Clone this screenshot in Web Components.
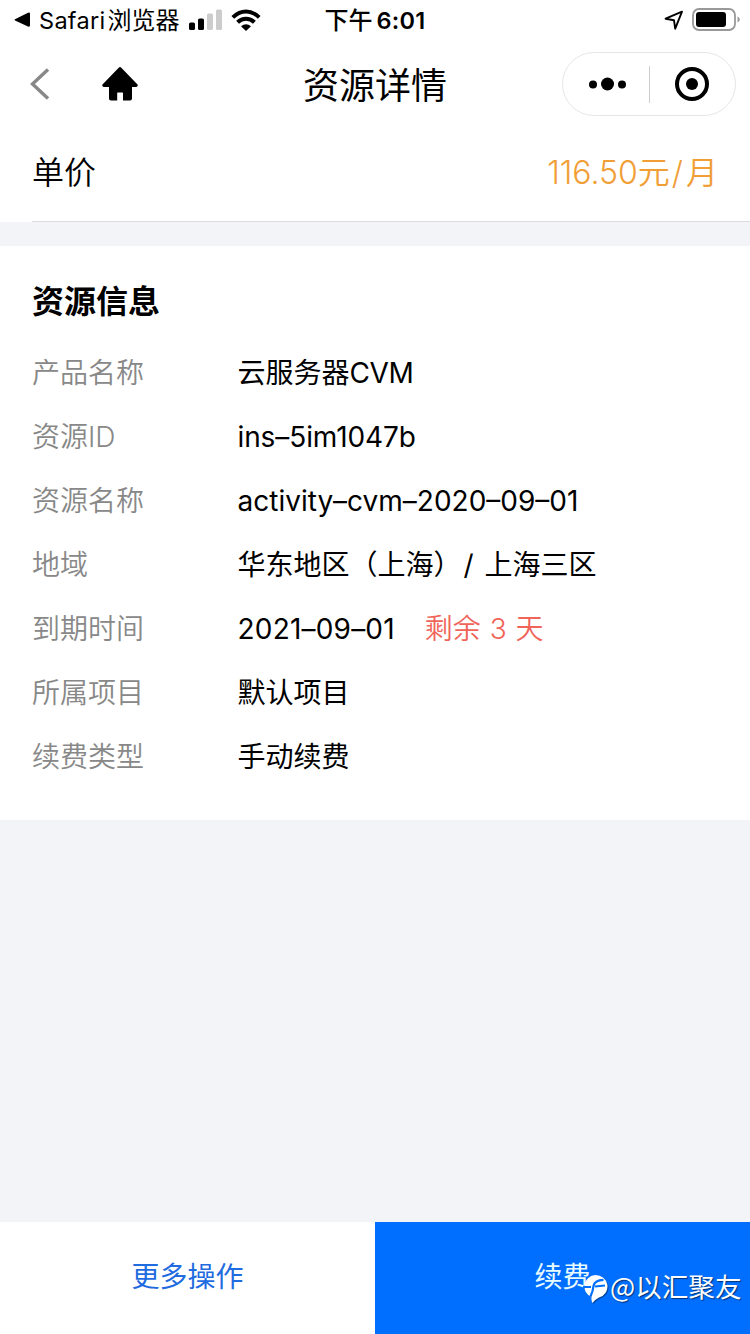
<!DOCTYPE html>
<html lang="zh-CN">
<head>
<meta charset="UTF-8">
<title>资源详情</title>
<style>
  body {
    margin: 0;
    background: #f2f4f7;
    color: #000;
    font-family: Inter, "Noto Sans CJK SC", sans-serif;
  }
</style>
</head>
<body>
<resource-page>
  <status-bar slot="top" app="Safari" suffix="浏览器" period="下午" time="6:01"></status-bar>
  <nav-bar slot="top" title="资源详情"></nav-bar>
  <price-row slot="top" label="单价"><span>116.50</span>元<span style="margin:0 3px 0 2px">/</span>月</price-row>

  <info-card title="资源信息">
    <info-row label="产品名称">云服务器<span style="letter-spacing:-0.4px">CVM</span></info-row>
    <info-row label="资源ID"><span style="letter-spacing:-0.1px">ins–5im1047b</span></info-row>
    <info-row label="资源名称"><span>activity–cvm–2020–09–01</span></info-row>
    <info-row label="地域">华东地区（上海）<span style="letter-spacing:1.5px;margin-left:2px">/ </span>上海三区</info-row>
    <info-row label="到期时间"><span style="letter-spacing:0.2px">2021–09–01</span><span slot="note">剩余 3 天</span></info-row>
    <info-row label="所属项目">默认项目</info-row>
    <info-row label="续费类型">手动续费</info-row>
  </info-card>

  <action-bar slot="bottom">
    <action-button>更多操作</action-button>
    <action-button primary>续费</action-button>
  </action-bar>
</resource-page>
<water-mark>@以汇聚友</water-mark>

<script>
// Base class: puts markup and styles in an open shadow root
class BaseElement extends HTMLElement {
  constructor() {
    super();
    this.attachShadow({ mode: 'open' });
  }

  connectedCallback() {
    const template = document.createElement('template');
    template.innerHTML = `<style>${this.getStyles()}</style>${this.getTemplate()}`;
    this.shadowRoot.append(template.content.cloneNode(true));
  }
}

class ResourcePage extends BaseElement {
  getTemplate() {
    return `
      <header><slot name="top"></slot></header>
      <main><slot></slot></main>
      <slot name="bottom"></slot>
    `;
  }

  getStyles() {
    return `
      :host { display: flex; flex-direction: column; height: 1334px; overflow: hidden; }
      header { background: #fff; }
      main { flex: 1; padding-top: 24px; }
    `;
  }
}

class StatusBar extends BaseElement {
  getTemplate() {
    return `
      <div class="left">
        <svg width="16" height="16" viewBox="0 0 16 16"><path d="M1 7.2 14 .8Q16 .2 16 1.5V13.5Q16 15.2 14 14.4L1 8.4Q0 7.8 1 7.2Z"/></svg>
        <span class="app">${this.getAttribute('app')}</span>
        <span class="suffix">${this.getAttribute('suffix')}</span>
        <svg class="signal" width="33" height="22" viewBox="0 0 33 22">
          <rect x="0" y="13.5" width="6" height="7.5" rx="1.6"/>
          <rect x="9" y="9.5" width="6" height="11.5" rx="1.6"/>
          <rect x="18" y="4.5" width="6" height="16.5" rx="1.6" fill="#ccc"/>
          <rect x="27" y="0.5" width="6" height="20.5" rx="1.6" fill="#ccc"/>
        </svg>
        <svg class="wifi" width="30" height="22" viewBox="0 0 30 22" fill="none" stroke="#000" stroke-width="4">
          <path d="M1.800 8.400Q8 2.500 15 2.500T28.200 8.400"/>
          <path d="M6.600 13.300Q10.300 9.700 15 9.700T23.400 13.300"/>
          <path d="M15 22 10 17.200Q15 13.200 20 17.200Z" fill="#000" stroke="none"/>
        </svg>
      </div>
      <div class="clock"><span>${this.getAttribute('period')}</span><b>${this.getAttribute('time')}</b></div>
      <div class="right">
        <svg width="20" height="22" viewBox="0 0 20 22"><path d="M1.600 9.700 18 2.700 11.200 19.700 10 11.300Z" fill="none" stroke="#000" stroke-width="1.900" stroke-linejoin="round"/></svg>
        <svg width="48" height="24" viewBox="0 0 48 24">
          <rect x="1" y="1" width="42" height="21" rx="6" fill="none" stroke="#999" stroke-width="1.8"/>
          <rect x="4" y="4" width="30" height="15" rx="3"/>
          <path d="M45.5 8.5Q47.8 9.5 47.8 11.5T45.5 14.5Z" fill="#999"/>
        </svg>
      </div>
    `;
  }

  getStyles() {
    return `
      :host { display: grid; grid-template-columns: 1fr auto 1fr; height: 40px; font-size: 24px; line-height: 42px; }
      div { display: flex; align-items: center; height: 40px; white-space: nowrap; }
      span, b { padding-top: 2px; }
      .left { padding-left: 14px; }
      .app { margin-left: 9px; font-size: 23.5px; letter-spacing: .3px; }
      .suffix { margin-left: 2px; }
      .signal { margin-left: 9px; }
      .wifi { margin-left: 9px; }
      .clock span { font-weight: 500; }
      .clock b { margin-left: 4px; font-weight: 600; font-size: 23.5px; letter-spacing: .3px; }
      .right { justify-content: flex-end; padding-right: 10.5px; gap: 8px; }
    `;
  }
}

class NavBar extends BaseElement {
  getTemplate() {
    return `
      <div class="left">
        <svg width="20" height="32" viewBox="0 0 20 32"><path d="M18 1.5 2.5 16 18 30.5" fill="none" stroke="#888" stroke-width="3.4"/></svg>
        <svg class="home" width="36" height="34" viewBox="0 0 36 34"><path d="M16.7.7Q18-.5 19.300.7L35.500 17.500Q36.400 19.500 34 20H30V31.500Q30 33.500 28 33.500H21V26Q21 25.500 20.500 25.500H15.700Q15.200 25.500 15.200 26V33.500H9Q7 33.500 7 31.500V20H2Q-.4 19.500.5 17.500Z"/></svg>
      </div>
      <h1>${this.getAttribute('title')}</h1>
      <div class="capsule">
        <svg width="40" height="16" viewBox="0 0 40 16"><circle cx="5" cy="8.500" r="4"/><circle cx="19.500" cy="8" r="6.500"/><circle cx="34" cy="8.500" r="4"/></svg>
        <i></i>
        <svg width="34" height="34" viewBox="0 0 34 34"><circle cx="17" cy="17" r="15" fill="none" stroke="#000" stroke-width="4"/><circle cx="17" cy="17" r="6"/></svg>
      </div>
    `;
  }

  getStyles() {
    return `
      :host { display: grid; grid-template-columns: 1fr auto 1fr; align-items: center; height: 88px; }
      .left { display: flex; align-items: center; padding-left: 30px; }
      .home { margin-left: 52px; margin-top: -1px; }
      h1 { margin: 0; padding-top: 4px; font-size: 36px; font-weight: 400; line-height: 50px; }
      .capsule { justify-self: end; display: grid; grid-template-columns: 1fr 1px 1fr; align-items: center; justify-items: center;
        box-sizing: border-box; width: 174px; height: 64px; margin-right: 14px; border: 1px solid #e6e6e6; border-radius: 32px; }
      .capsule i { width: 1px; height: 37px; background: #ccc; }
      .capsule svg:first-child { margin-left: 5px; }
    `;
  }
}

class PriceRow extends BaseElement {
  getTemplate() {
    return `<span>${this.getAttribute('label')}</span><strong><slot></slot></strong>`;
  }

  getStyles() {
    return `
      :host { display: flex; justify-content: space-between; box-sizing: border-box; height: 94px; margin-left: 32px;
        padding-right: 32px; border-bottom: 1px solid #dcdcdc; font-size: 32px; line-height: 90px; }
      span, strong { font-weight: 350; }
      strong { color: #f09e35; }
    `;
  }
}

class InfoCard extends BaseElement {
  getTemplate() {
    return `<h2>${this.getAttribute('title')}</h2><slot></slot>`;
  }

  getStyles() {
    return `
      :host { display: block; padding: 33px 32px 31px; background: #fff; }
      h2 { margin: 0 0 16px; font-size: 32px; font-weight: 700; line-height: 46px; }
    `;
  }
}

class InfoRow extends BaseElement {
  getTemplate() {
    return `
      <span class="label">${this.getAttribute('label')}</span>
      <span class="value"><slot></slot></span>
      <span class="note"><slot name="note"></slot></span>
    `;
  }

  getStyles() {
    return `
      :host { display: flex; font-size: 28px; line-height: 64px; white-space: nowrap; }
      .label { width: 205.5px; color: #888; font-weight: 350; }
      .note { margin-left: 30px; color: #f0645a; font-weight: 350; word-spacing: 1px; }
    `;
  }
}

class ActionBar extends BaseElement {
  getTemplate() {
    return `<slot></slot>`;
  }

  getStyles() {
    return `:host { display: grid; grid-template-columns: 1fr 1fr; height: 112px; }`;
  }
}

class ActionButton extends BaseElement {
  getTemplate() {
    return `<slot></slot>`;
  }

  getStyles() {
    return `
      :host { display: block; background: #fff; color: #1f6be0; font-size: 28px; line-height: 110px; text-align: center; }
      :host([primary]) { background: #006eff; color: #e8fbff; }
    `;
  }
}

// Floats over the bottom right corner
class WaterMark extends BaseElement {
  getTemplate() {
    return `
      <svg width="26" height="30" viewBox="0 0 26 30">
        <path d="M12.500 1A12 11.500 0 0 1 16 23.500Q12 25.500 9.500 29Q8 26 8.500 23A12 11.500 0 0 1 12.500 1Z" fill="#fff"/>
        <path d="M7.500 22.500Q10 17 10.500 12 11.500 6.200 20.500 5.800M0 13H8M12 12.500 22 11.500" fill="none" stroke="#006eff" stroke-width="2.200"/>
      </svg>
      <slot></slot>
    `;
  }

  getStyles() {
    return `
      :host { position: absolute; left: 583px; top: 1266px; display: flex; align-items: center; height: 40px;
        color: #fff; font: 26.6px/40px "Noto Sans CJK SC", sans-serif; white-space: nowrap; text-shadow: 1px 1px 1px #0008; }
      svg { margin: 6px 1px 0 0; filter: drop-shadow(1px 1px 0 #0006); }
    `;
  }
}

customElements.define('resource-page', ResourcePage);
customElements.define('status-bar', StatusBar);
customElements.define('nav-bar', NavBar);
customElements.define('price-row', PriceRow);
customElements.define('info-card', InfoCard);
customElements.define('info-row', InfoRow);
customElements.define('action-bar', ActionBar);
customElements.define('action-button', ActionButton);
customElements.define('water-mark', WaterMark);
</script>
</body>
</html>
